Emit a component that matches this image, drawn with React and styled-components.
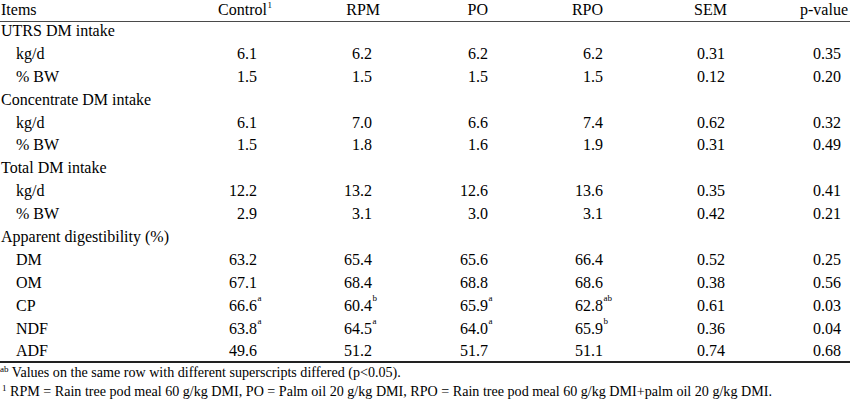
import React from 'react';
import styled, { createGlobalStyle } from 'styled-components';

const GlobalStyle = createGlobalStyle`
  html, body {
    margin: 0;
    padding: 0;
    background: #fff;
    overflow: hidden;
  }
  body {
    font-family: "Liberation Serif", "Times New Roman", serif;
    color: #000;
  }
`;

const GRID = '200px 90px 120px 110px 120px 120px 90px';

const Page = styled.div`
  width: 850px;
`;

const HeadRow = styled.div`
  display: grid;
  grid-template-columns: ${GRID};
  font-size: 16px;
  line-height: 18px;
  padding: 1px 0 2px;
  border-bottom: 1px solid #4a4a4a;
`;

const Body = styled.div`
  border-bottom: 2px solid #222;
`;

const Row = styled.div`
  display: grid;
  grid-template-columns: ${GRID};
  font-size: 16px;
  line-height: 18px;
  height: 22.9px;
  box-sizing: border-box;

  &:last-child {
    height: 19px;
  }
`;

const Label = styled.div`
  padding-left: ${(p) => (p.$indent ? '16px' : '1px')};
  white-space: nowrap;
`;

const HeadCell = styled.div`
  text-align: right;
  padding-right: ${(p) => p.$pad}px;
  white-space: nowrap;
`;

const Value = styled.div`
  text-align: right;
  padding-right: ${(p) => p.$pad}px;
  white-space: nowrap;
`;

const Num = styled.span`
  position: relative;
  display: inline-block;
`;

const Sup = styled.span`
  position: absolute;
  left: 100%;
  top: ${(p) => (p.$top !== undefined ? p.$top : -3)}px;
  font-size: 9px;
  line-height: 9px;
  padding-left: 0.5px;
`;

const Notes = styled.div`
  font-size: 14.1px;
  line-height: 18.3px;
`;

const NoteLine = styled.div`
  white-space: nowrap;
`;

const NoteSup = styled.sup`
  font-size: 9px;
  line-height: 0;
  vertical-align: 5px;
  margin-left: ${(p) => p.$shift || 0}px;
`;

const columns = [
  { label: 'Control', sup: '1', headPad: 23, valuePad: 33 },
  { label: 'RPM', headPad: 30, valuePad: 38 },
  { label: 'PO', headPad: 32, valuePad: 32 },
  { label: 'RPO', headPad: 37, valuePad: 37 },
  { label: 'SEM', headPad: 33, valuePad: 35 },
  { label: 'p-value', headPad: 2, valuePad: 9 },
];

const rows = [
  { label: 'UTRS DM intake' },
  { label: 'kg/d', values: ['6.1', '6.2', '6.2', '6.2', '0.31', '0.35'] },
  { label: '% BW', values: ['1.5', '1.5', '1.5', '1.5', '0.12', '0.20'] },
  { label: 'Concentrate DM intake' },
  { label: 'kg/d', values: ['6.1', '7.0', '6.6', '7.4', '0.62', '0.32'] },
  { label: '% BW', values: ['1.5', '1.8', '1.6', '1.9', '0.31', '0.49'] },
  { label: 'Total DM intake' },
  { label: 'kg/d', values: ['12.2', '13.2', '12.6', '13.6', '0.35', '0.41'] },
  { label: '% BW', values: ['2.9', '3.1', '3.0', '3.1', '0.42', '0.21'] },
  { label: 'Apparent digestibility (%)' },
  { label: 'DM', values: ['63.2', '65.4', '65.6', '66.4', '0.52', '0.25'] },
  { label: 'OM', values: ['67.1', '68.4', '68.8', '68.6', '0.38', '0.56'] },
  { label: 'CP', values: ['66.6^a', '60.4^b', '65.9^a', '62.8^ab', '0.61', '0.03'] },
  { label: 'NDF', values: ['63.8^a', '64.5^a', '64.0^a', '65.9^b', '0.36', '0.04'] },
  { label: 'ADF', values: ['49.6', '51.2', '51.7', '51.1', '0.74', '0.68'] },
];

const renderValue = (text) => {
  const [num, sup] = text.split('^');
  return (
    <Num>
      {num}
      {sup && <Sup>{sup}</Sup>}
    </Num>
  );
};

const App = () => (
  <Page>
    <GlobalStyle />
    <HeadRow>
      <Label>Items</Label>
      {columns.map((col) => (
        <HeadCell key={col.label} $pad={col.headPad}>
          <Num>
            {col.label}
            {col.sup && <Sup $top={0}>{col.sup}</Sup>}
          </Num>
        </HeadCell>
      ))}
    </HeadRow>

    <Body>
      {rows.map((row, i) => (
        <Row key={i}>
          <Label $indent={!!row.values}>{row.label}</Label>
          {row.values &&
            row.values.map((v, j) => (
              <Value key={j} $pad={columns[j].valuePad}>
                {renderValue(v)}
              </Value>
            ))}
        </Row>
      ))}
    </Body>

    <Notes>
      <NoteLine>
        <NoteSup>ab</NoteSup> Values on the same row with different superscripts differed (p&lt;0.05).
      </NoteLine>
      <NoteLine>
        <NoteSup $shift={2}>1</NoteSup> RPM = Rain tree pod meal 60 g/kg DMI, PO = Palm oil 20 g/kg DMI, RPO = Rain
        tree pod meal 60 g/kg DMI+palm oil 20 g/kg DMI.
      </NoteLine>
    </Notes>
  </Page>
);

export default App;
